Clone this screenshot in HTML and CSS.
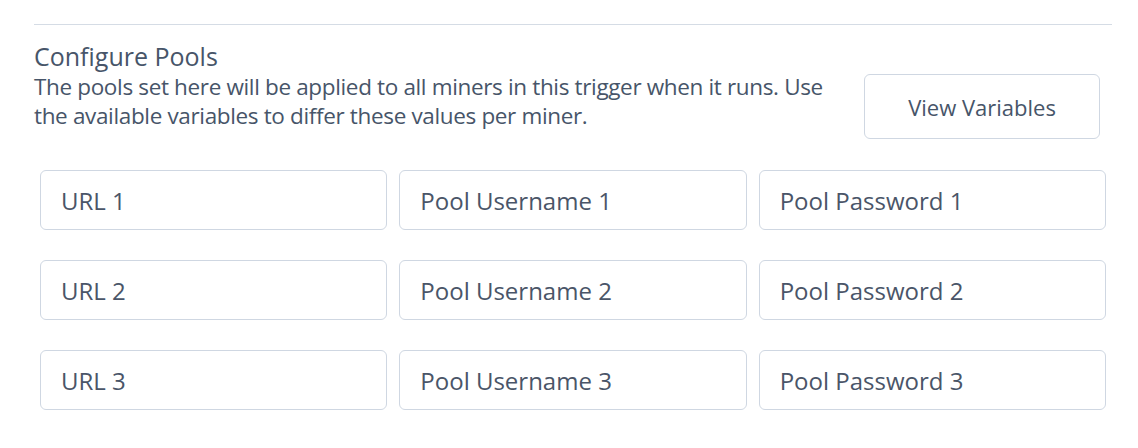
FILE: index.html
```html
<!DOCTYPE html>
<html>
<head>
<meta charset="utf-8">
<link rel="stylesheet" href="styles.css">
</head>
<body>
<section class="pools">
  <hr class="divider">
  <h2 class="title">Configure Pools</h2>
  <div class="intro">
    <p class="desc">The pools set here will be applied to all miners in this trigger when it runs. Use the available variables to differ these values per miner.</p>
    <button class="btn">View Variables</button>
  </div>
  <div class="grid">
    <div class="field">URL 1</div>
    <div class="field">Pool Username 1</div>
    <div class="field">Pool Password 1</div>
    <div class="field">URL 2</div>
    <div class="field">Pool Username 2</div>
    <div class="field">Pool Password 2</div>
    <div class="field">URL 3</div>
    <div class="field">Pool Username 3</div>
    <div class="field">Pool Password 3</div>
  </div>
</section>
</body>
</html>
```
FILE: styles.css
```css
* { box-sizing: border-box; }
html, body { margin: 0; padding: 0; background: #fff; }
body {
  font-family: "Open Sans", "Liberation Sans", sans-serif;
  color: #4a5568;
}
.pools {
  width: 1078px;
  margin-left: 34px;
  padding-top: 24px;
}
.divider {
  border: 0;
  border-top: 1px solid #d5dce5;
  margin: 0;
}
.title {
  margin: 15px 0 0;
  font-size: 25px;
  font-weight: 400;
  line-height: 32px;
  color: #475569;
}
.intro {
  display: flex;
  justify-content: space-between;
  align-items: flex-start;
  margin-top: 0;
}
.desc {
  margin: 0;
  width: 815px;
  font-size: 22.5px;
  line-height: 29px;
  letter-spacing: -0.35px;
  color: #475569;
}
.btn {
  margin-top: 2px;
  margin-right: 12px;
  width: 236px;
  height: 65px;
  flex: none;
  background: #fff;
  border: 1px solid #cfd7e2;
  border-radius: 6px;
  font-family: inherit;
  font-size: 22px;
  color: #475569;
}
.grid {
  display: grid;
  grid-template-columns: repeat(3, 1fr);
  column-gap: 12px;
  row-gap: 30px;
  margin: 31px 6px 0;
}
.field {
  height: 60px;
  border: 1px solid #cfd7e2;
  border-radius: 6px;
  padding-left: 20px;
  display: flex;
  align-items: center;
  font-size: 24px;
  color: #4a5568;
}
```
